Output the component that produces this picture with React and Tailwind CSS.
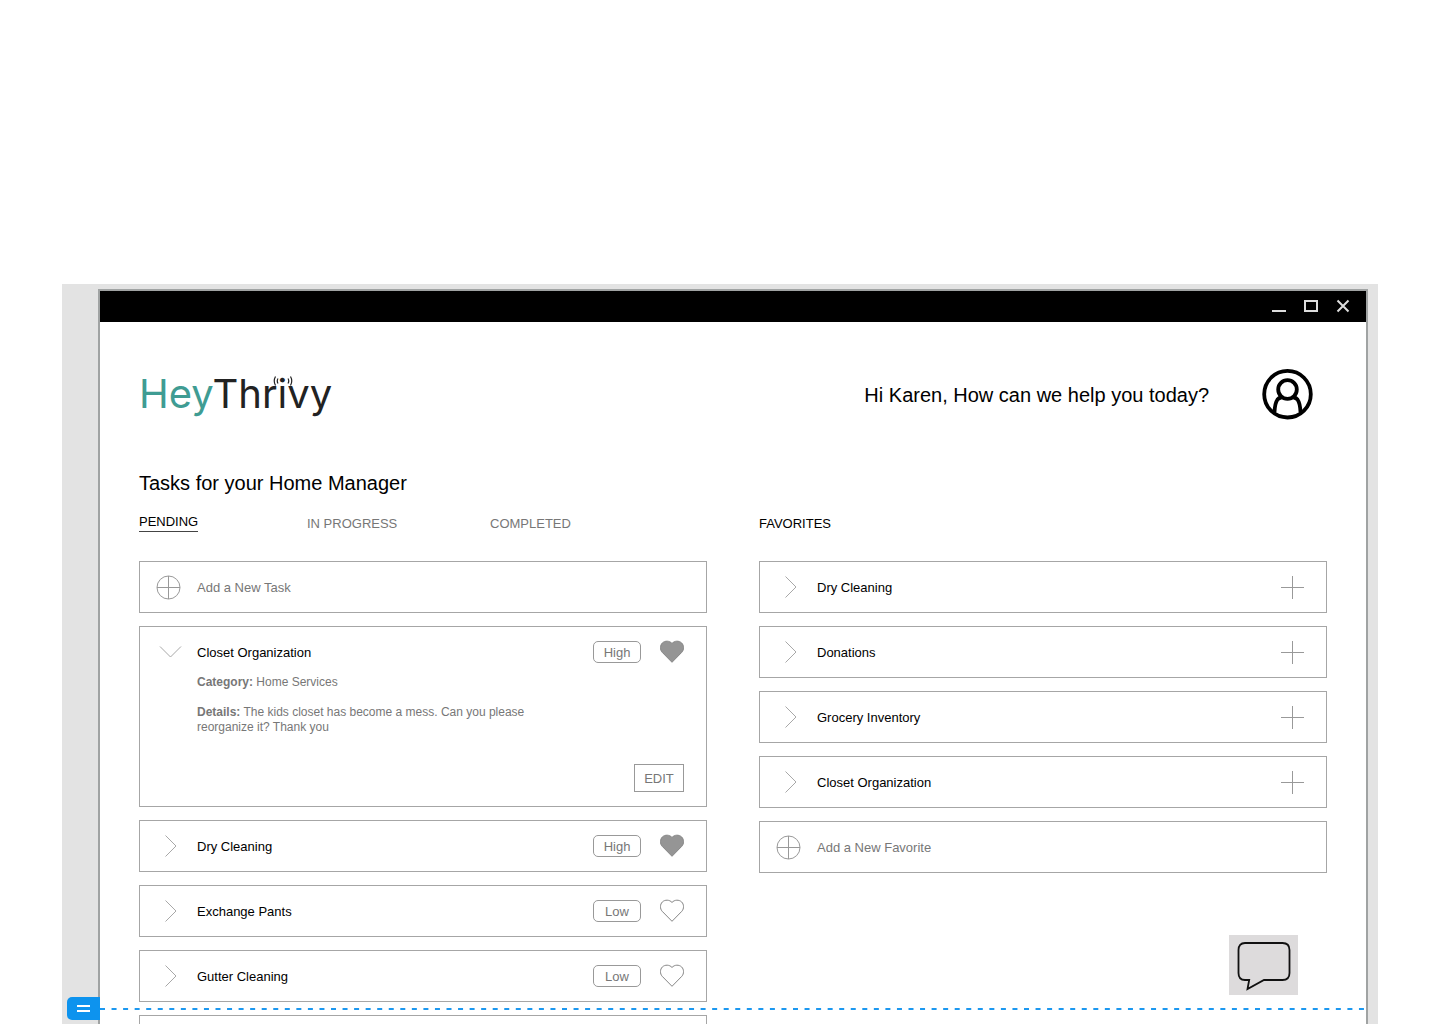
import { useState } from "react";

const tabs = ["PENDING", "IN PROGRESS", "COMPLETED"];

const tasks = [
  { id: 1, title: "Dry Cleaning", priority: "High", favorite: true },
  { id: 2, title: "Exchange Pants", priority: "Low", favorite: false },
  { id: 3, title: "Gutter Cleaning", priority: "Low", favorite: false },
];

const favorites = ["Dry Cleaning", "Donations", "Grocery Inventory", "Closet Organization"];

const ChevronRight = () => (
  <svg className="w-7 h-6" viewBox="0 0 28 24" fill="none" stroke="#a8a8a8">
    <path d="M9.500 1.500 20 12 9.500 22.500" />
  </svg>
);

const ChevronDown = () => (
  <svg className="w-7 h-6" viewBox="0 0 28 24" fill="none" stroke="#a8a8a8">
    <path d="M4 6.500 14.500 17 25 6.500" />
  </svg>
);

const CirclePlus = () => (
  <svg className="w-[25px] h-[25px]" viewBox="0 0 25 25" fill="none" stroke="#999">
    <circle cx="12.500" cy="12.500" r="11.500" />
    <path d="M12.500 1v23M1 12.500h23" />
  </svg>
);

const Heart = ({ filled }) => (
  <svg
    className="w-6 h-6"
    viewBox="0 0 24 24"
    fill={filled ? "#959595" : "none"}
    stroke="#858585"
    strokeWidth="1"
  >
    <path d="M12 22.300 2.200 12.300C-.2 9.700 0 5.300 2.300 3 4.900.5 9.500.5 12 3.500c2.500-3 7.100-3 9.700-.5 2.300 2.300 2.500 6.700.1 9.300z" />
  </svg>
);

const Card = ({ children }) => (
  <li className="border border-[#a6a6a6] pl-4 pr-[22px] py-[14px] min-h-[52px]">{children}</li>
);

const TaskHeader = ({ title, priority, favorite, open }) => (
  <div className="flex items-center h-[22px]">
    <button className="w-[41px] shrink-0" aria-label={open ? "Collapse" : "Expand"}>
      {open ? <ChevronDown /> : <ChevronRight />}
    </button>
    <h3 className="flex-1 pt-0.5 text-black">{title}</h3>
    <span className="w-12 h-[22px] leading-[22px] mr-[19px] border border-[#999] rounded-[5px] text-center text-[#777]">
      {priority}
    </span>
    <button aria-label="Favorite" aria-pressed={favorite}>
      <Heart filled={favorite} />
    </button>
  </div>
);

const AddRow = ({ label }) => (
  <Card>
    <button className="flex items-center w-full h-[22px] text-left text-[#777]">
      <span className="w-[41px]">
        <CirclePlus />
      </span>
      <span className="pt-0.5">{label}</span>
    </button>
  </Card>
);

const Logo = () => (
  <a
    href="#home"
    className="relative font-['Inter',sans-serif] font-normal text-[40px] leading-[50px] text-[#222]"
  >
    <span className="text-[#3f9c93]">Hey</span>Thrivy
    {/* Signal waves either side of the i's dot */}
    <svg
      className="absolute left-[134px] top-[6px] w-5 h-3"
      viewBox="0 0 20 12"
      fill="none"
      stroke="#222"
      strokeWidth="1.200"
    >
      <path d="M5 3.500q-1.500 2.500 0 5M2.500 1.500q-2.500 4.500 0 9M15 3.500q1.500 2.500 0 5M17.500 1.500q2.500 4.500 0 9" />
    </svg>
  </a>
);

const App = () => {
  const [activeTab, setActiveTab] = useState("PENDING");

  return (
    <div className="relative h-screen overflow-hidden bg-white px-[62px] pt-[284px] font-['Liberation_Sans',Arial,sans-serif] text-[13px] leading-4">
      <div className="bg-[#e3e3e3] min-h-full pl-9 pr-[10px] pt-[5px]">
        <div className="bg-white border-2 border-[#a0a3a3] min-h-screen">
          {/* Title bar */}
          <div className="bg-black h-[31px] flex items-center justify-end gap-4 pr-[15px] pb-0.5 text-[#ddd]">
            <button aria-label="Minimize">
              <svg className="w-4 h-4" viewBox="0 0 16 16" stroke="currentColor" strokeWidth="2">
                <path d="M1 13h14" />
              </svg>
            </button>
            <button aria-label="Maximize">
              <svg className="w-4 h-4" viewBox="0 0 16 16" fill="none" stroke="currentColor" strokeWidth="2">
                <path d="M2 3h12v10H2z" />
              </svg>
            </button>
            <button aria-label="Close">
              <svg className="w-4 h-4" viewBox="0 0 16 16" stroke="currentColor" strokeWidth="2">
                <path d="M2.500 2.500l11 11M13.500 2.500l-11 11" />
              </svg>
            </button>
          </div>

          <div className="px-[39px] pt-[46px]">
            <header className="flex items-center justify-between h-[52px] pr-[14px]">
              <Logo />
              <div className="flex items-center gap-[53px]">
                <p className="pt-0.5 text-xl text-black">Hi Karen, How can we help you today?</p>
                <button aria-label="Profile">
                  <svg
                    className="w-[51px] h-[51px]"
                    viewBox="0 0 51 51"
                    fill="none"
                    stroke="black"
                    strokeWidth="3.800"
                  >
                    <circle cx="25.500" cy="25.200" r="23.300" />
                    <circle cx="25.500" cy="20.500" r="9.300" />
                    <path d="M12.500 43c.3-6 1.200-10 3-12.500 1-1.300 2-1.800 4-2M38.500 43c-.3-6-1.200-10-3-12.500-1-1.300-2-1.800-4-2" />
                  </svg>
                </button>
              </div>
            </header>

            <h1 className="mt-[51px] text-xl leading-6 text-black">Tasks for your Home Manager</h1>

            <div className="mt-[19px] grid grid-cols-2 gap-[52px]">
              <section>
                <nav className="grid grid-cols-[168px_183px_auto] items-end justify-start h-[18px]">
                  {tabs.map((tab) => (
                    <button
                      key={tab}
                      onClick={() => setActiveTab(tab)}
                      className={
                        tab === activeTab
                          ? "justify-self-start pb-px border-b border-[#444] text-black"
                          : "justify-self-start text-[#777]"
                      }
                    >
                      {tab}
                    </button>
                  ))}
                </nav>
                <ul className="mt-[29px] flex flex-col gap-[13px]">
                  <AddRow label="Add a New Task" />
                  <Card>
                    <TaskHeader title="Closet Organization" priority="High" favorite open />
                    <div className="mt-3 pl-[41px] text-xs leading-[15px] text-[#777]">
                      <p>
                        <b>Category:</b> Home Services
                      </p>
                      <p className="mt-[15px]">
                        <b>Details:</b> The kids closet has become a mess. Can you please
                        <br />
                        reorganize it? Thank you
                      </p>
                    </div>
                    <div className="mt-[29px] flex justify-end">
                      <button className="w-[50px] h-7 pt-0.5 border border-[#999] text-[#777]">EDIT</button>
                    </div>
                  </Card>
                  {tasks.map((task) => (
                    <Card key={task.id}>
                      <TaskHeader {...task} />
                    </Card>
                  ))}
                  <Card />
                </ul>
              </section>

              <section>
                <h2 className="flex items-end h-[18px] text-black">FAVORITES</h2>
                <ul className="mt-[29px] flex flex-col gap-[13px]">
                  {favorites.map((title) => (
                    <Card key={title}>
                      <div className="flex items-center h-[22px]">
                        <button className="w-[41px] shrink-0" aria-label="Expand">
                          <ChevronRight />
                        </button>
                        <h3 className="flex-1 pt-0.5 text-black">{title}</h3>
                        <button aria-label="Add to tasks">
                          <svg className="w-6 h-6" viewBox="0 0 24 24" stroke="#999">
                            <path d="M12.500 1v23M1 12.500h23" />
                          </svg>
                        </button>
                      </div>
                    </Card>
                  ))}
                  <AddRow label="Add a New Favorite" />
                </ul>
              </section>
            </div>
          </div>
        </div>
      </div>

      {/* Chat launcher floats over the window */}
      <button
        aria-label="Chat"
        className="absolute right-[142px] bottom-[29px] w-[69px] h-[60px] bg-[#dddbdc]"
      >
        <svg
          className="w-full h-full"
          viewBox="0 0 69 60"
          fill="none"
          stroke="#111"
          strokeWidth="1.800"
        >
          <path d="M16 8h37.500q7 0 7 7v23q0 7-7 7H35L18.500 54l1.700-9H16q-6.500 0-6.500-7V15q0-7 6.500-7z" />
        </svg>
      </button>

      {/* Fold marker */}
      <div className="absolute left-[67px] right-[75px] bottom-1 flex items-center">
        <button
          aria-label="Fold handle"
          className="w-[33px] h-[23px] shrink-0 rounded-l-[5px] bg-[#0d93ee] flex flex-col items-center justify-center gap-[3px]"
        >
          <span className="w-[13px] h-[2px] bg-white" />
          <span className="w-[13px] h-[2px] bg-white" />
        </button>
        <svg className="flex-1 h-[2px]" stroke="#1c98f0" strokeWidth="2">
          <line x1="0" y1="1" x2="100%" y2="1" strokeDasharray="5 6.550" />
        </svg>
      </div>
    </div>
  );
};

export default App;
